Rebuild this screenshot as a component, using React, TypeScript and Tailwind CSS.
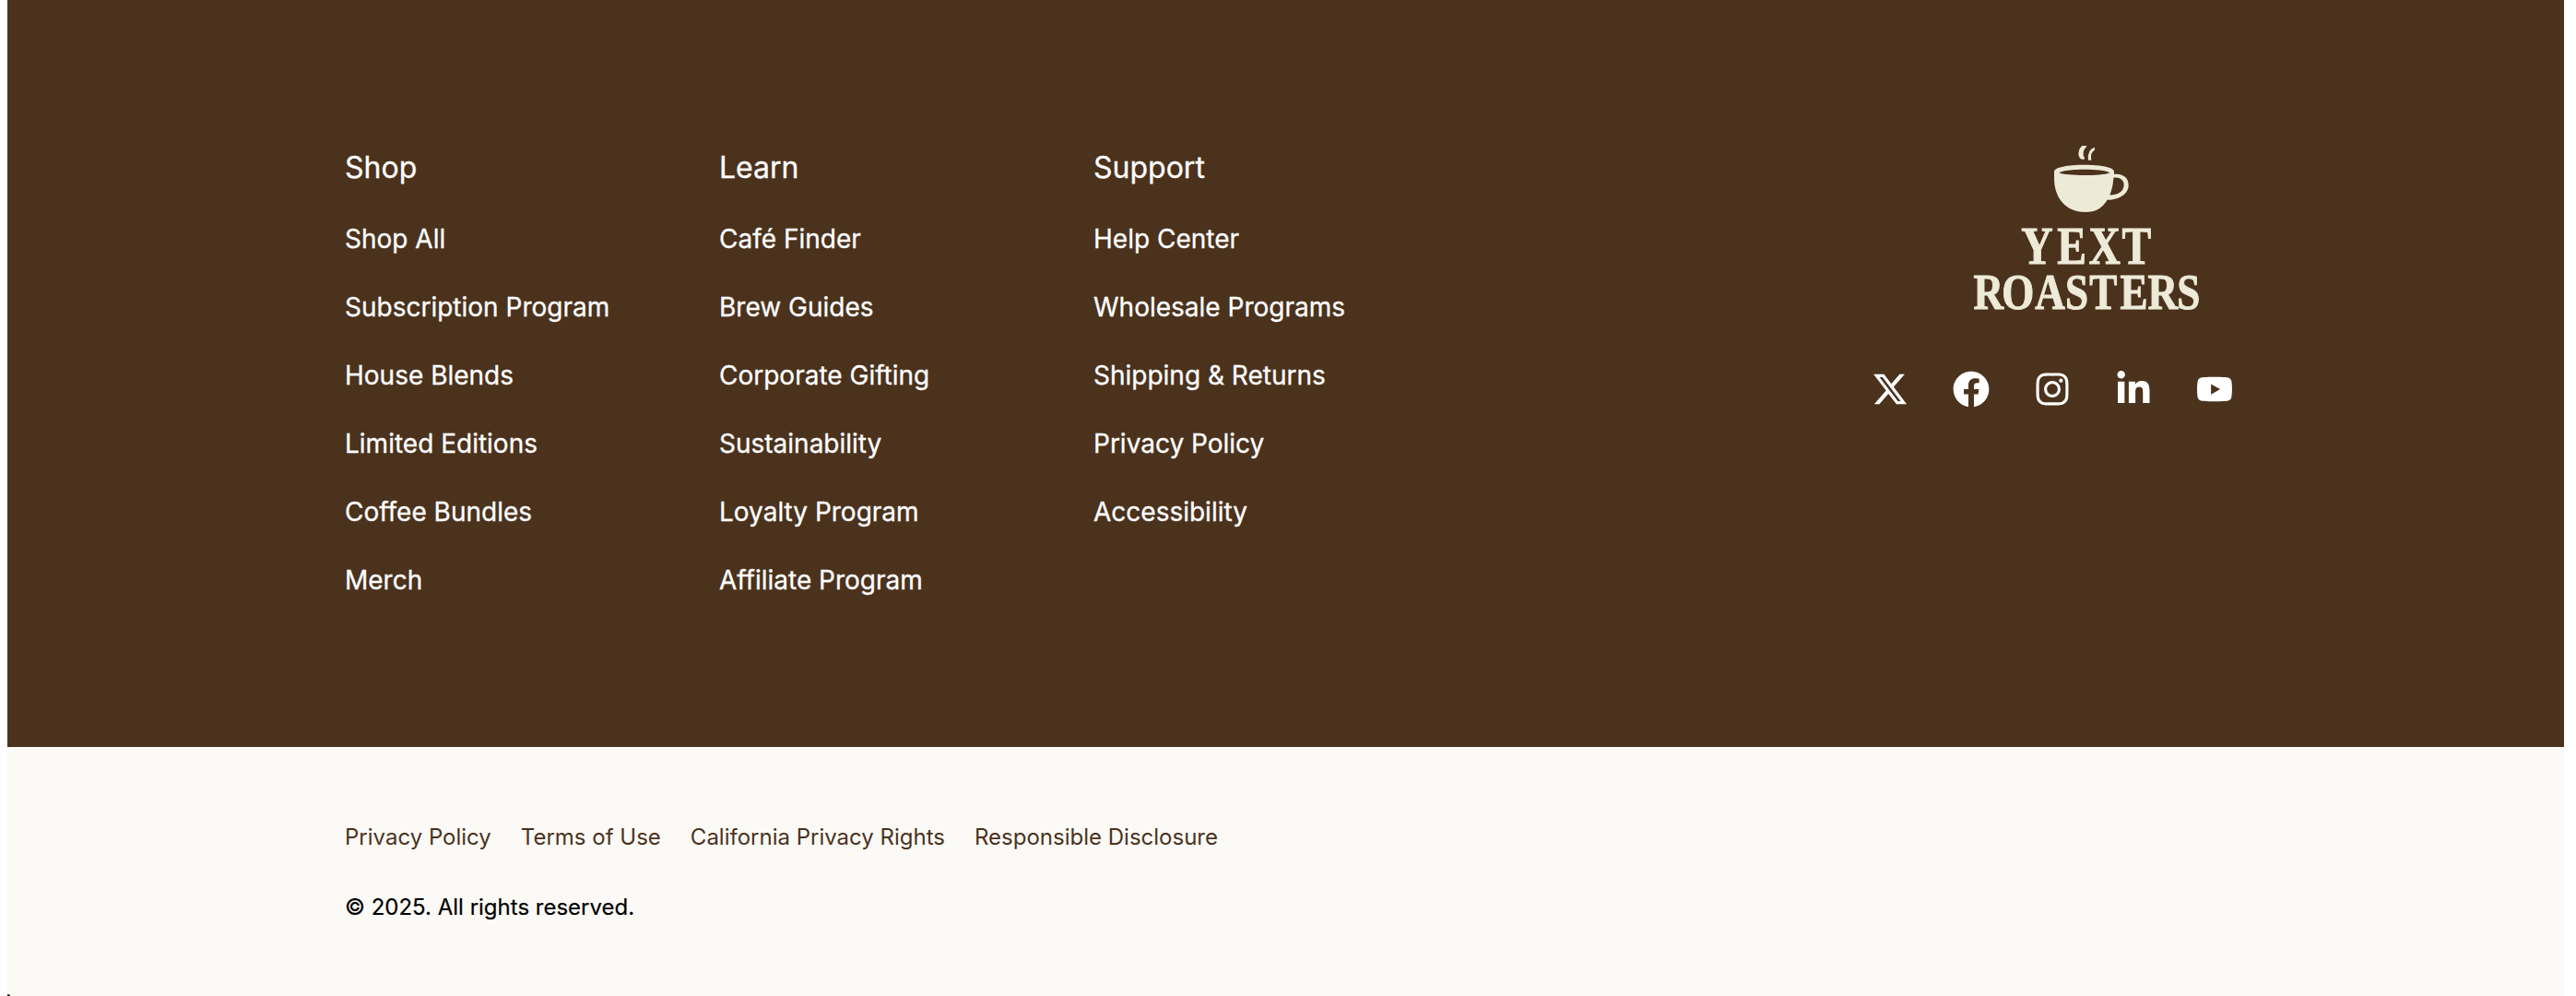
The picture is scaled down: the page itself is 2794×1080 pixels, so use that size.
import { FaFacebook, FaInstagram, FaLinkedinIn, FaYoutube } from "react-icons/fa";
import { FaXTwitter } from "react-icons/fa6";

const columns = [
  {
    title: "Shop",
    links: ["Shop All", "Subscription Program", "House Blends", "Limited Editions", "Coffee Bundles", "Merch"],
  },
  {
    title: "Learn",
    links: ["Café Finder", "Brew Guides", "Corporate Gifting", "Sustainability", "Loyalty Program", "Affiliate Program"],
  },
  {
    title: "Support",
    links: ["Help Center", "Wholesale Programs", "Shipping & Returns", "Privacy Policy", "Accessibility"],
  },
];

const legal = ["Privacy Policy", "Terms of Use", "California Privacy Rights", "Responsible Disclosure"];

const socials = [
  { name: "X", Icon: FaXTwitter },
  { name: "Facebook", Icon: FaFacebook },
  { name: "Instagram", Icon: FaInstagram },
  { name: "LinkedIn", Icon: FaLinkedinIn },
  { name: "YouTube", Icon: FaYoutube },
];

function Logo() {
  return (
    <svg viewBox="0 0 870 630" className="h-[210px] w-[290px]" fill="#edead8">
      {/* steam */}
      <path d="M416 54 L431 55 Q410 76 424 96 L418 99 Q404 98 403 81 Q404 62 416 54Z" />
      <path d="M456 59 L456 68 Q440 76 445 101 L435 101 Q431 66 456 59Z" />
      {/* cup */}
      <path
        fillRule="evenodd"
        d="M324 138 C324 124 368 116 422 116 C476 116 519 124 519 138 L519 147 C547 143 566 159 566 182 C566 211 535 230 497 230 C481 256 460 270 425 270 C358 270 324 220 324 160Z M340 142 C362 153 482 153 505 142 C482 128 362 128 340 142Z M517 158 C516 180 512 198 505 214 C532 216 551 202 551 181 C551 165 537 155 517 158Z"
      />
      <g
        transform="scale(.83 1)"
        stroke="#edead8"
        strokeWidth="3"
        className="font-['Liberation_Serif',serif] font-bold"
      >
        <text y="437" fontSize="172" x="261 402 526 656">YEXT</text>
        <text y="584" fontSize="163" x="74 185 315 434 529 649 757 872">ROASTERS</text>
      </g>
    </svg>
  );
}

export default function App() {
  return (
    <div className="relative h-[1080px] w-[2794px] overflow-hidden bg-white pl-2 pr-[13px] font-[Inter,sans-serif]">
      <footer className="flex h-full flex-col">
        <div className="flex h-[810px] justify-between bg-[#4b321d] pl-[366px] pr-[359px] text-white [-webkit-text-stroke:0.3px_white]">
          <nav className="flex pt-[158px]">
            {columns.map((col) => (
              <div key={col.title} className="flex w-[406px] flex-col">
                <h2 className="text-[32px] leading-[48px]">{col.title}</h2>
                <ul className="mt-8 flex flex-col gap-8 text-[28px] leading-[42px]">
                  {col.links.map((l) => (
                    <li key={l}>
                      <a>{l}</a>
                    </li>
                  ))}
                </ul>
              </div>
            ))}
          </nav>
          <div className="flex flex-col items-end pt-[140px]">
            <div className="pr-3">
              <Logo />
            </div>
            <div className="mt-[52px] flex gap-12">
              {socials.map(({ name, Icon }) => (
                <a key={name} aria-label={name}>
                  <Icon className="size-10" />
                </a>
              ))}
            </div>
          </div>
        </div>
        <div className="flex flex-1 flex-col bg-[#fbfaf6] pl-[366px] pt-20 text-2xl leading-9">
          <div className="flex gap-8 leading-9 text-[#4b321d]">
            {legal.map((l) => (
              <a key={l}>{l}</a>
            ))}
          </div>
          <p className="mt-10 leading-9 text-black [-webkit-text-stroke:0.2px_black]">© 2025. All rights reserved.</p>
        </div>
      </footer>
      <span className="absolute bottom-0 left-2 h-[2px] w-[3px] rounded-tr-full bg-[#222222]" />
    </div>
  );
}
